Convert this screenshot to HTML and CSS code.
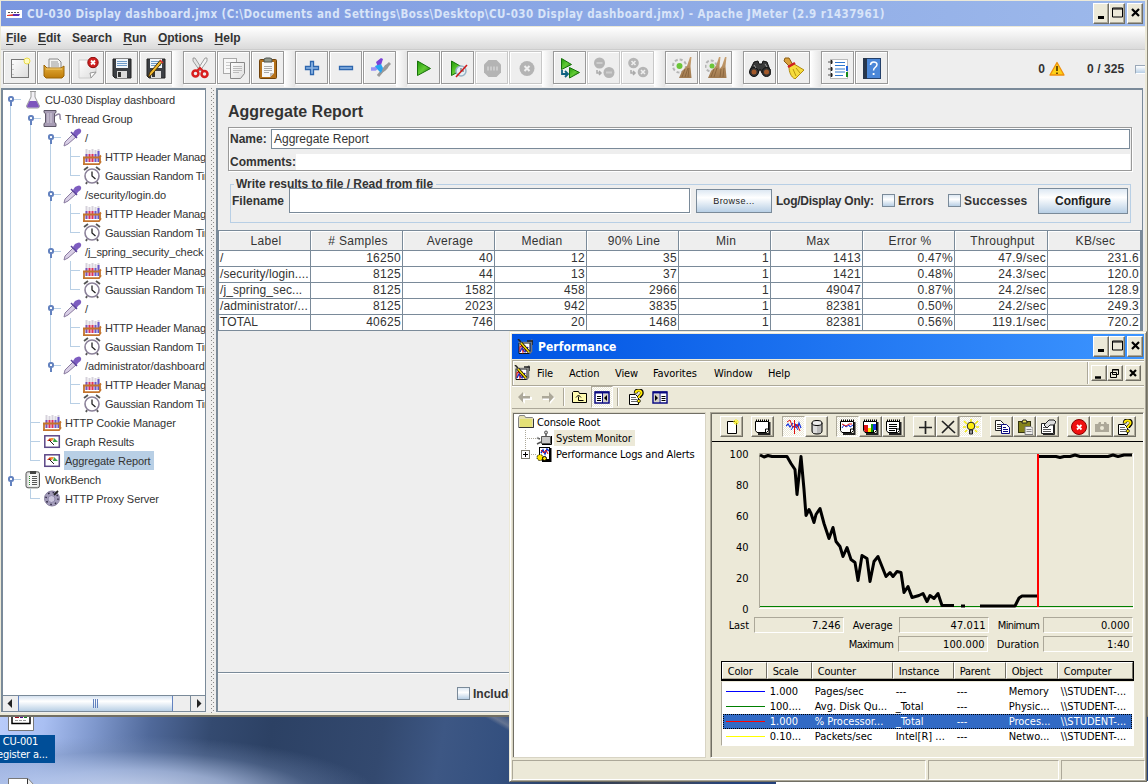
FILE: index.html
```html
<!DOCTYPE html>
<html lang="en">
<head>
<meta charset="utf-8">
<title>Apache JMeter</title>
<link rel="stylesheet" href="styles.css">
</head>
<body>
<svg class="defs" width="0" height="0">
<defs>
<linearGradient id="gGreen" x1="0" y1="0" x2="1" y2="1"><stop offset="0" stop-color="#1f9a08"/><stop offset=".5" stop-color="#62cc34"/><stop offset="1" stop-color="#176c08"/></linearGradient>
<linearGradient id="gGold" x1="0" y1="0" x2="0" y2="1"><stop offset="0" stop-color="#e8b23c"/><stop offset="1" stop-color="#bd7a08"/></linearGradient>
<linearGradient id="gPaper" x1="0" y1="0" x2="1" y2="1"><stop offset="0" stop-color="#fff"/><stop offset="1" stop-color="#dcdcdc"/></linearGradient>
<linearGradient id="gBroom" x1="0" y1="0" x2="0" y2="1"><stop offset="0" stop-color="#c9a070"/><stop offset="1" stop-color="#a07a50"/></linearGradient>
</defs>
<symbol id="i-new" viewBox="0 0 22 22"><rect x="2.500" y="2.500" width="17" height="18" fill="url(#gPaper)" stroke="#777"/><path d="M4 7v1M4 12v1M4 17v1" stroke="#999"/><circle cx="18" cy="4" r="3" fill="#fffbc0" stroke="#eadb4a"/></symbol>
<symbol id="i-open" viewBox="0 0 22 22"><path d="M6 2h9l3 3v8H6z" fill="#f4f4f4" stroke="#888"/><path d="M8 5h7M8 7h8M8 9h8" stroke="#999"/><path d="M1 8l3 3h14l3-2v10l-2 2H3l-2-2z" fill="url(#gGold)" stroke="#9a6407"/><path d="M3 12h16" stroke="#f6d27c"/></symbol>
<symbol id="i-close" viewBox="0 0 22 22"><path d="M2 3h17v13l-5 5H2z" fill="url(#gPaper)" stroke="#ccc"/><path d="M19 15l-6 1 1 5z" fill="#fff" stroke="#999"/><circle cx="16" cy="5.500" r="5.200" fill="#cf1f1f" stroke="#8d0c0c"/><path d="M14 3.500l4 4m0-4l-4 4" stroke="#fff" stroke-width="1.800"/></symbol>
<symbol id="i-save" viewBox="0 0 22 22"><path d="M2 2h18v19H4l-2-2z" fill="#3c3f44" stroke="#222"/><rect x="5" y="2" width="12" height="9" fill="#f0f5fa"/><path d="M6 4.500h10M6 6.500h10M6 8.500h10" stroke="#6f9bc8"/><rect x="6" y="14" width="10" height="7" fill="#ddd"/><rect x="7" y="15" width="3" height="5" fill="#333"/></symbol>
<symbol id="i-saveas" viewBox="0 0 22 22"><use href="#i-save"/><path d="M4.500 16L15 3.500l2 2L6.500 18l-3 2z" fill="#f0b72c" stroke="#4a3205"/><path d="M15 3l3 3" stroke="#d33" stroke-width="1.500"/></symbol>
<symbol id="i-cut" viewBox="0 0 22 22"><path d="M4 1l2 0 7 11-2 2L4 4z" fill="#e5e5e5" stroke="#888" stroke-width=".8"/><path d="M18 1l-2 0-7 11 2 2 7-10z" fill="#f5f5f5" stroke="#888" stroke-width=".8"/><circle cx="6.500" cy="16.500" r="3" fill="none" stroke="#d81e1e" stroke-width="2.500"/><circle cx="15.500" cy="17" r="3" fill="none" stroke="#d81e1e" stroke-width="2.500"/><path d="M8 14l3-3 3 3" stroke="#d81e1e" stroke-width="2" fill="none"/></symbol>
<symbol id="i-copy" viewBox="0 0 22 22"><rect x=".5" y="1.500" width="13" height="15" fill="#f8f8f8" stroke="#aaa"/><path d="M3 5.500h8M3 8.500h5M3 11.500h5" stroke="#ccc"/><path d="M7.500 5.500h14v11l-4 5h-10z" fill="url(#gPaper)" stroke="#888"/><path d="M10 9.500h9M10 11.500h9M10 13.500h9M10 15.500h6" stroke="#bbb"/></symbol>
<symbol id="i-paste" viewBox="0 0 22 22"><rect x="2.500" y="2.500" width="17" height="19" rx="1" fill="#b5711b" stroke="#6f420b"/><path d="M5 5h12v11l-4 4H5z" fill="#f7f7f7"/><path d="M7 9.500h8M7 11.500h8M7 13.500h8M7 15.500h5" stroke="#aaa"/><path d="M13 20l0-4 4 0z" fill="#bbb"/><path d="M7 5V2l2-1h4l2 1v3z" fill="#8f968c" stroke="#4e534c"/></symbol>
<symbol id="i-plus" viewBox="0 0 22 22"><path d="M9.500 4.500h3v5h5v3h-5v5h-3v-5h-5v-3h5z" fill="#8db6e4" stroke="#2d66ae" stroke-width="1.300"/></symbol>
<symbol id="i-minus" viewBox="0 0 22 22"><path d="M4.500 9.500h13v3h-13z" fill="#8db6e4" stroke="#2d66ae" stroke-width="1.300"/></symbol>
<symbol id="i-toggle" viewBox="0 0 22 22"><path d="M9 20l4-6 3-6 4-1-1 4-3 3-4 2z" fill="#999"/><path d="M9 19l5-6 7-7" stroke="#999" stroke-width="3" fill="none"/><path d="M2 12l4 0 4-3" stroke="#9a92f5" stroke-width="3.500" fill="none"/><path d="M7 5l5-4 2 1-2 6-3 2z" fill="#7b42d8"/><path d="M6 9l6-2 2 4-2 5-3-3z" fill="#27a4f2"/></symbol>
<symbol id="i-run" viewBox="0 0 22 22"><path d="M4.500 4l13 7.500-13 7z" fill="url(#gGreen)" stroke="#17720a"/></symbol>
<symbol id="i-runnt" viewBox="0 0 22 22"><path d="M4.500 4l13 7.500-13 7z" fill="url(#gGreen)" stroke="#17720a"/><circle cx="14" cy="14" r="5" fill="#e4eef5" stroke="#98b3c6" stroke-width="1.500"/><path d="M14 11v3h3" stroke="#555" fill="none"/><path d="M9 20L20 8" stroke="#d01818" stroke-width="1.600"/></symbol>
<symbol id="i-stop" viewBox="0 0 22 22"><path d="M7.500 3h8l4.500 4.500v8L15.500 20h-8L3 15.500v-8z" fill="#b4b4b4"/><path d="M6 11.500h11" stroke="#ccc" stroke-width="4" stroke-dasharray="2 1"/></symbol>
<symbol id="i-shut" viewBox="0 0 22 22"><circle cx="12" cy="11.500" r="7.500" fill="#b4b4b4"/><path d="M9.500 9l5 5m0-5l-5 5" stroke="#efefef" stroke-width="2"/></symbol>
<symbol id="i-remote" viewBox="0 0 22 22"><path d="M2.500 1.500l10 6-10 5z" fill="url(#gGreen)" stroke="#17720a"/><path d="M10.500 10.500l10 5-10 5.500z" fill="url(#gGreen)" stroke="#17720a"/><path d="M3 13v4h5m-2-3l3 3-3 3" fill="none" stroke="#0d6080" stroke-width="1.800"/></symbol>
<symbol id="i-rstop" viewBox="0 0 22 22"><circle cx="6.500" cy="6" r="5.500" fill="#b5b5b5"/><circle cx="16" cy="15.500" r="5.500" fill="#b5b5b5"/><path d="M3.500 6h6M13 15.500h6" stroke="#cdcdcd" stroke-width="2"/><path d="M4 13v3h4m-2-2l2 2-2 2" fill="none" stroke="#aaa" stroke-width="1.500"/></symbol>
<symbol id="i-rshut" viewBox="0 0 22 22"><circle cx="6.500" cy="6" r="5.300" fill="#b5b5b5"/><circle cx="16" cy="15" r="5.300" fill="#b5b5b5"/><path d="M4.500 4l4 4m0-4l-4 4M14 13l4 4m0-4l-4 4" stroke="#eee" stroke-width="1.600"/><path d="M4 13v3h4m-2-2l2 2-2 2" fill="none" stroke="#aaa" stroke-width="1.500"/></symbol>
<symbol id="i-clear" viewBox="0 0 22 22"><circle cx="8.500" cy="9" r="6.500" fill="#eee" stroke="#b5b5b5" stroke-dasharray="3 2" stroke-width="2"/><circle cx="8.500" cy="9" r="3" fill="#6cc63a"/><path d="M19 0h1.500l-1 9 1 12H8l3-7 5-5z" fill="url(#gBroom)"/><path d="M11 20l3-8M14 20l3-9M17 20l1-9" stroke="#7d5a34" stroke-width=".7"/></symbol>
<symbol id="i-clearall" viewBox="0 0 22 22"><circle cx="6" cy="9" r="5.500" fill="#e9e9e9" stroke="#b5b5b5" stroke-dasharray="3 2" stroke-width="2"/><circle cx="7" cy="9" r="2.500" fill="#6cc63a"/><path d="M14 0h1.500l-1 9 1 12H3l3-7 5-5z" fill="url(#gBroom)"/><path d="M20 0h1.500l-1 9 1 12H12l1-7 4-5z" fill="url(#gBroom)"/><path d="M6 20l3-8M9 20l3-9M15 20l1-8M18 20l1-9" stroke="#7d5a34" stroke-width=".7"/></symbol>
<symbol id="i-find" viewBox="0 0 22 22"><path d="M5 5l4-1 1 3h3l1-3 4 1 3 8-8 3-2-4-2 4-8-3z" fill="#3a3a3a" stroke="#111"/><circle cx="5" cy="15" r="4.500" fill="#333" stroke="#111"/><circle cx="17.500" cy="15" r="4.500" fill="#333" stroke="#111"/><circle cx="5" cy="15" r="2.500" fill="#a4592a"/><circle cx="17.500" cy="15" r="2.500" fill="#a4592a"/><path d="M5 8l2 3M16 7l2 3" stroke="#999"/></symbol>
<symbol id="i-broom" viewBox="0 0 22 22"><path d="M2 1l4 0 4 7-3 2-6-6z" fill="#d9a03c" stroke="#8b5d12"/><path d="M6 10l5-3 10 6-9 9c-4-2-6-7-6-12z" fill="#f6dc3c" stroke="#b08a10"/><path d="M5 10l7-4" stroke="#d02020" stroke-width="2.500"/><path d="M10 12l3 7M13 11l4 5" stroke="#b8960f"/></symbol>
<symbol id="i-list" viewBox="0 0 22 22"><rect x="3.500" y="2.500" width="17" height="19" fill="#fff" stroke="#bbb"/><path d="M8 5.500h10M8 8.500h10M8 12h10M8 15h10M8 18.500h8" stroke="#2f78d0"/><path d="M1 5h5M1 12h5M1 18h5" stroke="#888" stroke-width="1.500"/><path d="M4.500 3v4M4.500 10v4M4.500 16v4" stroke="#222" stroke-width="1.500"/><rect x="19" y="9" width="2" height="5" fill="#2464d8"/><rect x="19" y="15" width="2" height="5" fill="#128a1a"/></symbol>
<symbol id="i-help" viewBox="0 0 22 22"><rect x="2.500" y="1.500" width="17" height="20" fill="#4b87d8" stroke="#24406a"/><path d="M2 1h4v21H2z" fill="#27364c"/><path d="M9.500 8c0-4 6.500-4 6.500-.5 0 3-3.500 2.500-3.500 6" fill="none" stroke="#fff" stroke-width="1.500"/><rect x="11.700" y="16" width="1.800" height="2" fill="#fff"/></symbol>
<symbol id="i-warn" viewBox="0 0 16 16"><path d="M8 1.500L15 14H1z" fill="#fdd018" stroke="#ee8f0c" stroke-width="1.300" stroke-linejoin="round"/><path d="M8 5v5M8 11.500v1.500" stroke="#5a3a00" stroke-width="1.700"/></symbol>

<symbol id="t-flask" viewBox="0 0 20 19"><path d="M7 1.500h6M8 2v5l-4.500 9q0 2 2 2h9q2 0 2-2L12 7V2" fill="#f2f0f5" stroke="#999"/><path d="M6.500 11h7l2.500 5q0 1.500-1.500 1.500h-9Q4 17.500 4 16z" fill="#7d55bd"/></symbol>
<symbol id="t-spool" viewBox="0 0 20 19"><path d="M2 1.500h12v2l-1.500 1v9l1.500 1v3H2v-3l1.500-1v-9L2 3.500z" fill="#a79cb4" stroke="#5d5667"/><path d="M6 4v10M9 4v10" stroke="#d6cfdf"/><path d="M13 7q5-4 5 0t1 3" fill="none" stroke="#8f84a0" stroke-width="1.500"/></symbol>
<symbol id="t-drop" viewBox="0 0 20 19"><path d="M2 18l1-4 8-8 3 3-8 7z" fill="#d9cfe6" stroke="#8a7ba0"/><path d="M11 5l2-3q5-3 6 0t-3 5l-2 3z" fill="#7d5cc0"/><path d="M9 4l6 6" stroke="#5c449c" stroke-width="1.500"/></symbol>
<symbol id="t-tubes" viewBox="0 0 20 19"><path d="M4.500 2v13M7.500 3v12M10.500 2v13M13.500 3v12M16.500 2v13" stroke="#d7d3dc" stroke-width="2"/><path d="M4.500 7v8" stroke="#7a55b8" stroke-width="2"/><path d="M7.500 7v8M10.500 7v8" stroke="#e0305a" stroke-width="2"/><path d="M13.500 7v8M16.500 4v11" stroke="#6a58c8" stroke-width="2"/><path d="M1 10.500h16l2-2M1 17.200h16l2-3M2 10v7M18 9v7" fill="none" stroke="#c4742c" stroke-width="1.800"/></symbol>
<symbol id="t-clock" viewBox="0 0 20 19"><path d="M2 4l4-3M18 4l-4-3M5 16l-1 2M15 16l1 2" stroke="#555" stroke-width="1.800"/><circle cx="10" cy="10" r="7" fill="#fff" stroke="#8b8199" stroke-width="1.600"/><path d="M10 5.500V10l3.500 3" fill="none" stroke="#222" stroke-width="1.300"/></symbol>
<symbol id="t-gauge" viewBox="0 0 20 19"><rect x="2.800" y="3.800" width="14.500" height="11.500" fill="#fff" stroke="#5b4787" stroke-width="1.500"/><path d="M5 9l3-3 2 3z" fill="#e03a1c"/><path d="M8 6l4 0-2 3z" fill="#f39230"/><path d="M12 6l4 4-5 0z" fill="#3ca543"/><path d="M7 8l5 5" stroke="#222"/></symbol>
<symbol id="t-bench" viewBox="0 0 20 19"><rect x="3" y="1.800" width="13.500" height="16" rx="2" fill="#ddd" stroke="#555"/><rect x="5.500" y="3.500" width="9" height="13" fill="#f8f8f8"/><path d="M9 6.500h5M9 8.500h5M9 10.500h5M9 12.500h5M9 14.500h5" stroke="#555"/><path d="M6.500 6v9" stroke="#2b8a2b" stroke-dasharray="1 1"/><rect x="7" y="1" width="6" height="3" fill="#444"/></symbol>
<symbol id="t-proxy" viewBox="0 0 20 19"><circle cx="10" cy="9.500" r="7.500" fill="#a49dbb" stroke="#8880a0"/><circle cx="10" cy="9.500" r="6" fill="none" stroke="#2e2842" stroke-dasharray="1.500 3.200" stroke-width="1.500"/><circle cx="9.500" cy="10" r="3.500" fill="#cac5dc" stroke="#8f87ab"/><path d="M12 6l4-4" stroke="#222" stroke-width="1.800"/></symbol>

<symbol id="p-app" viewBox="0 0 16 16"><path d="M2 4h11v10.500H2z" fill="#fff" stroke="#111"/><path d="M1.500 3.500h11l2-2v11l-2 2" fill="none" stroke="#777" stroke-width="1.500"/><path d="M1 0l3 3M10 2h6v4" stroke="#222" fill="none" stroke-width="1.500"/><path d="M3 13V8l2-2 1 7 2-5 1 4 2-4" fill="none" stroke="#e01010" stroke-width="1.200"/><path d="M3 13l2-4 3 4 3-5" fill="none" stroke="#1030d0" stroke-width="1.200"/><path d="M4 4l8 9" stroke="#000" stroke-width="3"/><path d="M4 4l8 9" stroke="#f5d800" stroke-width="1.600"/></symbol>
<symbol id="p-left" viewBox="0 0 16 16"><path d="M2 8l5-5v4h7v3H7v4z" fill="#fff" transform="translate(1 1)"/><path d="M1 8l5-5v4h7v2.500H6v4z" fill="#aca899"/></symbol>
<symbol id="p-right" viewBox="0 0 16 16"><path d="M14 8L9 3v4H2v3h7v4z" fill="#fff" transform="translate(1 1)"/><path d="M14 8L9 3v4H2v2.500h7v4z" fill="#aca899"/></symbol>
<symbol id="p-up" viewBox="0 0 16 16"><path d="M.5 13.500v-10l1-1h5l1 2h7v9z" fill="#fffbb0" stroke="#000"/><path d="M11.500 11.500h-5v-4M4 8.500l2.500-2.500L9 8.500" fill="none" stroke="#000"/></symbol>
<symbol id="p-tree" viewBox="0 0 16 16"><rect x="1" y="3" width="14" height="11" fill="#fff" stroke="#0a0a80" stroke-width="1.500"/><path d="M1 3.500h14" stroke="#0a0a80" stroke-width="2"/><path d="M8.500 4v10" stroke="#0a0a80"/><path d="M9 5h5v8H9z" fill="#d4d0c8"/><path d="M3 7.500h4M3 9.500h4M3 11.500h4" stroke="#000"/><path d="M13 6v6l-3-3z"/></symbol>
<symbol id="p-act" viewBox="0 0 16 16"><rect x="1" y="3" width="14" height="11" fill="#fff" stroke="#0a0a80" stroke-width="1.500"/><path d="M1 3.500h14" stroke="#0a0a80" stroke-width="2"/><path d="M8 4v10" stroke="#0a0a80"/><path d="M2 5h5v8H2z" fill="#d4d0c8"/><path d="M9.500 7.500h4M9.500 9.500h4M9.500 11.500h4" stroke="#000"/><path d="M3 6v6l3-3z"/></symbol>
<symbol id="p-help" viewBox="0 0 16 16"><path d="M1.500 5.500h6l3 3v7h-9z" fill="#fff" stroke="#000"/><path d="M3 8.500h5M3 10.500h6M3 12.500h6" stroke="#666"/><path d="M7.500 4.500C7.500 0 14 0 14 4c0 2.500-3 2.500-3 5" fill="none" stroke="#000" stroke-width="3.600"/><path d="M7.500 4C8 .500 13.500 1 13.500 4c0 2.500-3 2-3 5" fill="none" stroke="#ffe800" stroke-width="2"/><circle cx="10.800" cy="12" r="1.600" fill="#ffe800" stroke="#000" stroke-width=".7"/></symbol>
<symbol id="p-folder" viewBox="0 0 16 16"><path d="M.5 13.500V3.500l1-2h5l1 2h7l1 1v9z" fill="#e6e0b0" stroke="#848484"/><path d="M2 5h12v8H2z" fill="#e2df5e" opacity=".7"/><path d="M15.500 5v8.500H1" fill="none" stroke="#333"/></symbol>
<symbol id="p-mon" viewBox="0 0 16 16"><path d="M5.500 6.500h9v7h-9z" fill="#c8c8c8" stroke="#555"/><path d="M15.500 6v8.500H6" fill="none" stroke="#000"/><path d="M10 6V3M4 9L1 8M5 12l-4 2" stroke="#555" stroke-width="1.500"/><circle cx="10" cy="2.500" r="1.500" fill="#ccc" stroke="#555"/><circle cx="1.800" cy="7.800" r="1" fill="#aaa"/></symbol>
<symbol id="p-logs" viewBox="0 0 16 16"><rect x="3.500" y="1.500" width="10" height="12" fill="#fff" stroke="#000"/><path d="M14.500 2v13H6" fill="none" stroke="#000" stroke-width="2"/><path d="M5 7l2-3 2 4 2-5 2 2" stroke="#1030d0" fill="none" stroke-width="1.500"/><path d="M5 4l3 3 2-3 2 4" stroke="#e01010" fill="none"/><circle cx="4" cy="11.500" r="3" fill="#ffe600" stroke="#000" stroke-dasharray="1.500 1"/><circle cx="8.500" cy="12.500" r="2" fill="#ffe600" stroke="#000"/></symbol>

<symbol id="m-page" viewBox="0 0 16 16"><path d="M3.500 2.500h9v12h-9z" fill="#fff" stroke="#000"/><path d="M12 0v6M9 3h6M10 1l4 4M14 1l-4 4" stroke="#f6ee20"/></symbol>
<symbol id="m-pad" viewBox="0 0 16 16"><path d="M14.500 3v12H3" fill="none" stroke="#222" stroke-width="2"/><path d="M.5 2.500h13v9l-2 2H2l-1.500-2z" fill="#fff" stroke="#000"/><path d="M1 1.500h13" stroke="#000" stroke-width="2" stroke-dasharray="1 1"/><path d="M10.500 14v-4h3" fill="none" stroke="#000"/></symbol>
<symbol id="m-live" viewBox="0 0 16 16"><path d="M0 7l2-2 2 3 3-4M9 5l3 3 1-4 2 5" fill="none" stroke="#1030e0" stroke-width="1.200"/><path d="M1 3l3-2 3 8M9 9l2-4 3 7" fill="none" stroke="#e01010"/><path d="M5 11l2-3 2-2 3 5" fill="none" stroke="#1030e0"/><path d="M8.500 1v14" stroke="#e01010"/></symbol>
<symbol id="m-cyl" viewBox="0 0 16 16"><path d="M3 4v8q0 3 5 3t5-3V4z" fill="#bbb" stroke="#000"/><path d="M5 5v9M7 5v9" stroke="#fff"/><ellipse cx="8" cy="4" rx="5" ry="2.500" fill="#eee" stroke="#000"/></symbol>
<symbol id="m-graph" viewBox="0 0 16 16"><use href="#m-pad"/><path d="M2 9l2-3 2 2 3-2 1 2 3-2" fill="none" stroke="#1030e0"/><path d="M2 5l4 2 3-2 3 0" fill="none" stroke="#e01010"/></symbol>
<symbol id="m-hist" viewBox="0 0 16 16"><use href="#m-pad"/><path d="M1 6h4v7H2l-1-2z" fill="#e01010"/><path d="M5 9h3v4H5z" fill="#ffe800"/><path d="M8 5h2v8H8z" fill="#0a9a0a"/><path d="M10 5h3v6h-3z" fill="#1030e0"/></symbol>
<symbol id="m-rep" viewBox="0 0 16 16"><use href="#m-pad"/><path d="M3 5.500h8M3 7.500h8M3 9.500h8M3 11.500h6" stroke="#000"/></symbol>
<symbol id="m-add" viewBox="0 0 16 16"><path d="M8.500 2v13M2 8.500h13" stroke="#222" stroke-width="1.700"/></symbol>
<symbol id="m-del" viewBox="0 0 16 16"><path d="M2 2l13 12M14 2L2 14" stroke="#222" stroke-width="1.700"/></symbol>
<symbol id="m-bulb" viewBox="0 0 16 16"><path d="M8 0v3M1 2l3 3M15 2l-3 3M0 8h3M13 8h3M2 13l2-2M14 13l-2-2" stroke="#f4ea10" stroke-width="1.500"/><circle cx="8" cy="7" r="3.800" fill="#ffee10" stroke="#222"/><path d="M6.500 11h3v4h-3z" fill="#999" stroke="#222"/></symbol>
<symbol id="m-copy" viewBox="0 0 16 16"><path d="M1.500 1.500h5l3 3v7h-8z" fill="#fff" stroke="#222"/><path d="M3 5.500h4M3 7.500h4M3 9.500h4" stroke="#333"/><path d="M7.500 5.500h5l3 3v6h-8z" fill="#fff" stroke="#0a0a80"/><path d="M9 8.500h3M9 10.500h5M9 12.500h5" stroke="#0a0a80"/></symbol>
<symbol id="m-paste" viewBox="0 0 16 16"><rect x="1.500" y="2.500" width="12" height="11" fill="#84821a" stroke="#333310"/><path d="M5 3l1-2h3l1 2v1H5z" fill="#e8e050" stroke="#222"/><path d="M8 7.500h6l2 2v6H8z" fill="#eee" stroke="#777"/><path d="M9.500 10.500h5M9.500 12.500h5" stroke="#888"/></symbol>
<symbol id="m-prop" viewBox="0 0 16 16"><path d="M1.500 4.500h12v10h-12z" fill="#fff" stroke="#222"/><path d="M3 8.500h5M3 10.500h8M3 12.500h8" stroke="#555"/><path d="M4 6l5-5h5l2 2-2 3-4 0-3 3z" fill="#ddd" stroke="#222"/><path d="M14.500 6v9.500H3" stroke="#222" fill="none"/></symbol>
<symbol id="m-freeze" viewBox="0 0 16 16"><circle cx="8" cy="8" r="7.500" fill="#f01010" stroke="#800"/><path d="M6 6l4.500 4.500m0-4.500L6 10.500" stroke="#fff" stroke-width="1.800"/></symbol>
<symbol id="m-cam" viewBox="0 0 16 16"><path d="M1 5h3l1-2h2v2h3V3h2l1 2h2v8H1z" fill="#aca899"/><circle cx="8" cy="9" r="2" fill="#ece9d8"/></symbol>
</svg>

<div class="desktop">
  <div class="dicon dicon-top"><svg width="26" height="14" viewBox="0 0 26 14"><path d="M.5 0v13.500h25V0" fill="#fff" stroke="#777"/><path d="M4 0v6.500h18V0" fill="#fff" stroke="#000" stroke-width="1.500"/><path d="M7 .5h4" stroke="#a01020"/><path d="M12 .5h3" stroke="#501090"/><path d="M16 .5h3" stroke="#108020"/><path d="M7 3.500h12" stroke="#999" stroke-dasharray="3 1"/></svg></div>
  <div class="dlabel"><div>CU-001</div><div>register a...</div></div>
  <div class="dicon dicon-low"><svg width="26" height="8" viewBox="0 0 26 8"><path d="M.5 8V.5H20l5.500 6V8" fill="#fff" stroke="#777"/><path d="M19.500 1v6.500H26" fill="#eee" stroke="#333"/></svg></div>
  <div class="deskedge"></div>
</div>

<main class="jm">
  <header class="jm-title">
    <svg class="jm-logo" width="16" height="8" viewBox="0 0 16 8"><path d="M0 0h16v8H0z" fill="#fff"/><path d="M2 2.500h12" stroke="#555" stroke-dasharray="2 1"/><path d="M1 5l7-1v2H1z" fill="#e03a30"/><path d="M7 4l7 0-1 2H7z" fill="#5a2ab0"/></svg>
    <h1>CU-030 Display dashboard.jmx (C:\Documents and Settings\Boss\Desktop\CU-030 Display dashboard.jmx) - Apache JMeter (2.9 r1437961)</h1>
    <div class="wbtns"><i><svg width="16" height="18"><path d="M4 13.500h6" stroke="#000" stroke-width="3"/></svg></i><i><svg width="16" height="18"><path d="M2.500 4h10v9h-10zM2 5h11" fill="none" stroke="#000"/></svg></i><i class="x"><svg width="16" height="18"><path d="M4 5l7 7m0-7l-7 7" stroke="#000" stroke-width="2.200"/></svg></i></div>
  </header>
  <nav class="jm-menu"><span><u>F</u>ile</span><span><u>E</u>dit</span><span>Search</span><span><u>R</u>un</span><span><u>O</u>ptions</span><span><u>H</u>elp</span></nav>
  <div class="jm-tools">
    <div class="tg"><b><svg><use href="#i-new"/></svg></b><b><svg><use href="#i-open"/></svg></b><b><svg><use href="#i-close"/></svg></b><b><svg><use href="#i-save"/></svg></b><b><svg><use href="#i-saveas"/></svg></b></div>
    <div class="tg"><b><svg><use href="#i-cut"/></svg></b><b><svg><use href="#i-copy"/></svg></b><b><svg><use href="#i-paste"/></svg></b></div>
    <div class="tg"><b><svg><use href="#i-plus"/></svg></b><b><svg><use href="#i-minus"/></svg></b><b><svg><use href="#i-toggle"/></svg></b></div>
    <div class="tg"><b><svg><use href="#i-run"/></svg></b><b><svg><use href="#i-runnt"/></svg></b><b class="off"><svg><use href="#i-stop"/></svg></b><b class="off"><svg><use href="#i-shut"/></svg></b></div>
    <div class="tg"><b><svg><use href="#i-remote"/></svg></b><b class="off"><svg><use href="#i-rstop"/></svg></b><b class="off"><svg><use href="#i-rshut"/></svg></b></div>
    <div class="tg"><b><svg><use href="#i-clear"/></svg></b><b><svg><use href="#i-clearall"/></svg></b></div>
    <div class="tg"><b><svg><use href="#i-find"/></svg></b><b><svg><use href="#i-broom"/></svg></b></div>
    <div class="tg last"><b><svg><use href="#i-list"/></svg></b><b><svg><use href="#i-help"/></svg></b></div>
    <div class="jm-count"><span>0</span><svg class="warn" width="16" height="16"><use href="#i-warn"/></svg><span class="thr">0 / 325</span><i class="led"></i></div>
  </div>
  <div class="jm-body">
    <section class="tree">
      <div class="rows">
        <div class="r"><i class="h"></i><svg class="fl"><use href="#t-flask"/></svg><span>CU-030 Display dashboard</span></div>
        <div class="r"><i class="v"></i><i class="h"></i><svg><use href="#t-spool"/></svg><span>Thread Group</span></div>
        <div class="r"><i class="v"></i><i class="v"></i><i class="h"></i><svg><use href="#t-drop"/></svg><span>/</span></div>
        <div class="r"><i class="v"></i><i class="v"></i><i class="v"></i><i class="t"></i><svg><use href="#t-tubes"/></svg><span>HTTP Header Manager</span></div>
        <div class="r"><i class="v"></i><i class="v"></i><i class="v"></i><i class="l"></i><svg><use href="#t-clock"/></svg><span>Gaussian Random Timer</span></div>
        <div class="r"><i class="v"></i><i class="v"></i><i class="h m"></i><svg><use href="#t-drop"/></svg><span>/security/login.do</span></div>
        <div class="r"><i class="v"></i><i class="v"></i><i class="v"></i><i class="t"></i><svg><use href="#t-tubes"/></svg><span>HTTP Header Manager</span></div>
        <div class="r"><i class="v"></i><i class="v"></i><i class="v"></i><i class="l"></i><svg><use href="#t-clock"/></svg><span>Gaussian Random Timer</span></div>
        <div class="r"><i class="v"></i><i class="v"></i><i class="h m"></i><svg><use href="#t-drop"/></svg><span>/j_spring_security_check</span></div>
        <div class="r"><i class="v"></i><i class="v"></i><i class="v"></i><i class="t"></i><svg><use href="#t-tubes"/></svg><span>HTTP Header Manager</span></div>
        <div class="r"><i class="v"></i><i class="v"></i><i class="v"></i><i class="l"></i><svg><use href="#t-clock"/></svg><span>Gaussian Random Timer</span></div>
        <div class="r"><i class="v"></i><i class="v"></i><i class="h m"></i><svg><use href="#t-drop"/></svg><span>/</span></div>
        <div class="r"><i class="v"></i><i class="v"></i><i class="v"></i><i class="t"></i><svg><use href="#t-tubes"/></svg><span>HTTP Header Manager</span></div>
        <div class="r"><i class="v"></i><i class="v"></i><i class="v"></i><i class="l"></i><svg><use href="#t-clock"/></svg><span>Gaussian Random Timer</span></div>
        <div class="r"><i class="v"></i><i class="v"></i><i class="h e"></i><svg><use href="#t-drop"/></svg><span>/administrator/dashboard</span></div>
        <div class="r"><i class="v"></i><i class="v"></i><i></i><i class="t"></i><svg><use href="#t-tubes"/></svg><span>HTTP Header Manager</span></div>
        <div class="r"><i class="v"></i><i class="v"></i><i></i><i class="l"></i><svg><use href="#t-clock"/></svg><span>Gaussian Random Timer</span></div>
        <div class="r"><i class="v"></i><i class="t"></i><svg><use href="#t-tubes"/></svg><span>HTTP Cookie Manager</span></div>
        <div class="r"><i class="v"></i><i class="t"></i><svg><use href="#t-gauge"/></svg><span>Graph Results</span></div>
        <div class="r"><i class="v"></i><i class="l"></i><svg><use href="#t-gauge"/></svg><span class="sel">Aggregate Report</span></div>
        <div class="r"><i class="h e"></i><svg class="fl"><use href="#t-bench"/></svg><span>WorkBench</span></div>
        <div class="r"><i></i><i class="l"></i><svg><use href="#t-proxy"/></svg><span>HTTP Proxy Server</span></div>
      </div>
      <div class="hscroll"><i class="arr"><svg width="15" height="15"><path d="M9 3v9L4.500 7.500z" fill="#222"/></svg></i><i class="thumb"><em></em><em></em><em></em></i><i class="track"></i><i class="arr r2"><svg width="15" height="15"><path d="M6 3v9l4.500-4.500z" fill="#222"/></svg></i></div>
    </section>
    <div class="divider"></div>
    <section class="panel">
      <h2>Aggregate Report</h2>
      <div class="namebox">
        <div class="nrow"><label>Name:</label><div class="field">Aggregate Report</div></div>
        <div class="crow"><label>Comments:</label><div class="blank"></div></div>
      </div>
      <fieldset class="fs"><legend>Write results to file / Read from file</legend>
        <div class="frow"><label>Filename</label><div class="file"></div><div class="btn browse">Browse...</div><label class="lg">Log/Display Only:</label><i class="cb"></i><label class="er">Errors</label><i class="cb"></i><label class="su">Successes</label><div class="btn conf">Configure</div></div>
      </fieldset>
      <div class="scroll">
        <table class="agg">
          <colgroup><col class="c92"><col class="c92"><col class="c92"><col class="c92"><col class="c92"><col class="c92"><col class="c92"><col class="c92"><col class="c93"><col class="c93"></colgroup>
          <thead><tr><th>Label</th><th># Samples</th><th>Average</th><th>Median</th><th>90% Line</th><th>Min</th><th>Max</th><th>Error %</th><th>Throughput</th><th>KB/sec</th></tr></thead>
          <tbody>
            <tr><td>/</td><td>16250</td><td>40</td><td>12</td><td>35</td><td>1</td><td>1413</td><td>0.47%</td><td>47.9/sec</td><td>231.6</td></tr>
            <tr><td>/security/login....</td><td>8125</td><td>44</td><td>13</td><td>37</td><td>1</td><td>1421</td><td>0.48%</td><td>24.3/sec</td><td>120.0</td></tr>
            <tr><td>/j_spring_sec...</td><td>8125</td><td>1582</td><td>458</td><td>2966</td><td>1</td><td>49047</td><td>0.87%</td><td>24.2/sec</td><td>128.9</td></tr>
            <tr><td>/administrator/...</td><td>8125</td><td>2023</td><td>942</td><td>3835</td><td>1</td><td>82381</td><td>0.50%</td><td>24.2/sec</td><td>249.3</td></tr>
            <tr><td>TOTAL</td><td>40625</td><td>746</td><td>20</td><td>1468</td><td>1</td><td>82381</td><td>0.56%</td><td>119.1/sec</td><td>720.2</td></tr>
          </tbody>
        </table>
      </div>
      <div class="include"><i class="cb"></i><label>Include</label></div>
    </section>
  </div>
</main>

<section class="pf">
  <header class="pf-title"><svg width="16" height="16"><use href="#p-app"/></svg><h3>Performance</h3>
    <div class="wbtns"><i><svg width="16" height="18"><path d="M4 13.500h6" stroke="#000" stroke-width="3"/></svg></i><i><svg width="16" height="18"><path d="M2.500 4h10v9h-10zM2 5h11" fill="none" stroke="#000"/></svg></i><i class="x"><svg width="16" height="18"><path d="M4 5l7 7m0-7l-7 7" stroke="#000" stroke-width="2.200"/></svg></i></div>
  </header>
  <nav class="pf-menu"><svg width="16" height="16"><use href="#p-app"/></svg><span class="w32">File</span><span class="w46">Action</span><span class="w38">View</span><span class="w61">Favorites</span><span class="w54">Window</span><span>Help</span>
    <div class="mdi"><i><svg width="16" height="16"><path d="M3 11.500h6" stroke="#000" stroke-width="2.500"/></svg></i><i><svg width="16" height="16"><path d="M4.500 3.500h6v5h-6zM4 4h7M2.500 6.500h6v5h-6z" fill="#ece9d8" stroke="#000"/></svg></i><i class="x"><svg width="16" height="16"><path d="M4 4l6 6m0-6l-6 6" stroke="#000" stroke-width="2.200"/></svg></i></div>
  </nav>
  <div class="pf-bar"><svg><use href="#p-left"/></svg><svg class="a2"><use href="#p-right"/></svg><i class="sep"></i><svg><use href="#p-up"/></svg><b><svg><use href="#p-tree"/></svg></b><i class="sep s2"></i><svg class="hp"><use href="#p-help"/></svg><svg><use href="#p-act"/></svg></div>
  <div class="pf-body">
    <div class="pf-tree">
      <div class="p0"><svg><use href="#p-folder"/></svg><span>Console Root</span></div>
      <div class="p1"><i class="dots"></i><svg><use href="#p-mon"/></svg><span class="psel">System Monitor</span></div>
      <div class="p1"><i class="dots end"><em></em></i><svg><use href="#p-logs"/></svg><span>Performance Logs and Alerts</span></div>
    </div>
    <div class="pf-mon">
      <div class="mbar">
        <div class="mg"><b><svg><use href="#m-page"/></svg></b></div>
        <div class="mg"><b><svg><use href="#m-pad"/></svg></b></div>
        <div class="mg"><b class="on"><svg><use href="#m-live"/></svg></b><b><svg><use href="#m-cyl"/></svg></b></div>
        <div class="mg"><b class="on"><svg><use href="#m-graph"/></svg></b><b><svg><use href="#m-hist"/></svg></b><b><svg><use href="#m-rep"/></svg></b></div>
        <div class="mg"><b><svg><use href="#m-add"/></svg></b><b><svg><use href="#m-del"/></svg></b><b class="on"><svg><use href="#m-bulb"/></svg></b></div>
        <div class="mg"><b><svg><use href="#m-copy"/></svg></b><b><svg><use href="#m-paste"/></svg></b><b><svg><use href="#m-prop"/></svg></b></div>
        <div class="mg"><b><svg><use href="#m-freeze"/></svg></b><b><svg><use href="#m-cam"/></svg></b><b><svg><use href="#p-help"/></svg></b></div>
      </div>
      <div class="chart">
        <div class="ylab"><span>100</span><span>80</span><span>60</span><span>40</span><span>20</span><span>0</span></div>
        <svg class="plot" width="375" height="156" viewBox="759 453 375 156">
          <path d="M759.500 608V453.500H1133" fill="none" stroke="#aca899"/><path d="M1133.500 453v155.500H759" fill="none" stroke="#fff"/>
          <path d="M760 606.500h373" stroke="#008000"/>
          <g fill="none" stroke="#000" stroke-width="3" stroke-linejoin="round">
          <path d="M760 455l4 2 4-1.500 4 1 15 0 4 7 4 6 2 25 4-38 3 33 2 26 3-6 2 4 3 9 2-8 4-6 4 15 5 15 4-11 3 14 4 5 3 10 4-9 4 12 4 3 3 18 4-25 5 3 3 23 4-20 4-5 4 10 4 10 4-4 3 4 4-5 4 1 3 20 4-6 4 11 7-2 4-2 4 8 3-6 4 3 4-5 4 12h12"/>
          <path d="M961 606h4M980 606h35l4-8 3-2h16M1038 456.500h18l4 1 4-1h6l5-1.500 5 1.500h28l5-1.500 5 1.500 6-1.500h8"/></g>
          <path d="M1038 454v153" stroke="#f00" stroke-width="2"/>
        </svg>
      </div>
      <div class="stats">
        <label>Last</label><output>7.246</output><label>Average</label><output>47.011</output><label class="tight">Minimum</label><output>0.000</output>
      </div>
      <div class="stats two">
        <label class="tight">Maximum</label><output>100.000</output><label>Duration</label><output>1:40</output>
      </div>
      <div class="ctr">
        <div class="crw chead"><span>Color</span><span>Scale</span><span>Counter</span><span>Instance</span><span>Parent</span><span>Object</span><span>Computer</span></div>
        <div class="clist">
          <div class="crw"><i class="blue"></i><span>1.000</span><span>Pages/sec</span><span>---</span><span>---</span><span>Memory</span><span>\\STUDENT-...</span></div>
          <div class="crw"><i class="green"></i><span>100....</span><span>Avg. Disk Qu...</span><span>_Total</span><span>---</span><span>Physic...</span><span>\\STUDENT-...</span></div>
          <div class="crw on"><i class="red"></i><span>1.000</span><span>% Processor...</span><span>_Total</span><span>---</span><span>Proces...</span><span>\\STUDENT-...</span></div>
          <div class="crw"><i class="yellow"></i><span>0.10...</span><span>Packets/sec</span><span>Intel[R] ...</span><span>---</span><span>Netwo...</span><span>\\STUDENT-...</span></div>
        </div>
      </div>
    </div>
  </div>
  <footer class="pf-status"><i></i><i></i><i></i></footer>
</section>
</body>
</html>
```

FILE: styles.css
```css
*, *::before, *::after { box-sizing: border-box; margin: 0; padding: 0; }
body { width: 1148px; height: 784px; overflow: hidden; position: relative; font-family: "Liberation Sans", Arial, sans-serif; font-size: 12px; color: #333; }
i, em { font-style: normal; display: block; flex: none; }
svg { display: block; flex: none; }
label, span, h1, h2, h3, legend { white-space: nowrap; }
.defs { position: absolute; }

/* desktop */
.desktop { position: absolute; left: 0; top: 714px; width: 1148px; height: 70px; overflow: hidden;
  background:
    radial-gradient(ellipse 80px 8px at 650px 70px, #4a4e58, transparent),
    linear-gradient(30deg, transparent 50%, rgba(140,145,160,.55) 58%, transparent 75%) 475px 0 / 60px 30px no-repeat,
    radial-gradient(ellipse 250px 62px at 130px 84px, rgba(214,224,246,.95) 0, rgba(180,197,232,.75) 45%, rgba(120,142,182,.35) 75%, rgba(80,105,150,0)),
    linear-gradient(100deg, #b9ccfb 0, #a9bff2 45px, #7f98cd 95px, #50699a 150px, #344a70 210px, #2c4164 270px, #33496f 380px, #3d5784 440px, #34507f 500px, #1f2f4c 640px, #24427c 700px); }
.dicon { position: absolute; left: 8px; }
.dicon-top { top: 3px; }
.dicon-low { top: 64px; }
.dlabel { position: absolute; left: -14px; top: 21px; width: 69px; height: 28px; background: #004e98; color: #fff; text-align: center; font: 11px/13px "DejaVu Sans Condensed", sans-serif; white-space: nowrap; letter-spacing: -.2px; }
.deskedge { position: absolute; left: 776px; right: 0; bottom: 0; height: 3px; background: #fff; }

/* window buttons */
.wbtns { display: flex; margin-left: auto; }
.wbtns i { width: 16px; height: 21px; background: #ece9d8; border: 1px solid; border-color: #fff #716f64 #716f64 #fff; box-shadow: inset -1px -1px #aca899; overflow: hidden; }
.wbtns .x { margin-left: 2px; }

/* JMeter window */
.jm { position: absolute; left: 0; top: 0; width: 1148px; height: 717px; background: #eee; border: solid #ece9d8; border-width: 1px 3px 4px 1px; display: flex; flex-direction: column; }
.jm::after { content: ""; position: absolute; left: -1px; right: -3px; top: -1px; bottom: -4px; border-right: 1px solid #8b887a; border-bottom: 2px solid #716f64; }
.jm-title { flex: none; height: 25px; display: flex; align-items: center; padding: 0 0 0 5px; background: linear-gradient(90deg, #7a96df, #9db9eb); }
.jm-title h1 { margin-left: 5px; font: bold 11.500px "DejaVu Sans Condensed", sans-serif; color: #d8e4f8; letter-spacing: .43px; }
.jm-title .wbtns { margin-right: 2px; }
.jm-menu { flex: none; height: 24px; border-top: 1px solid #ece9d8; border-bottom: 1px solid #ccc; background: linear-gradient(#fff, #dadada); display: flex; gap: 11.300px; align-items: center; padding: 0 0 1px 5px; font-weight: bold; }
.jm-menu u { text-underline-offset: 2px; }
.jm-tools { flex: none; height: 38px; display: flex; align-items: flex-start; padding: 1px 0 0 2px; background: #eee; }
.tg { display: flex; gap: 1px; padding-right: 11px; height: 36px; background: linear-gradient(90deg, transparent calc(100% - 11px), #fff calc(100% - 11px), #e4e4e4); }
.tg.last { padding-right: 3px; background: none; }
.tg b { width: 33px; height: 33px; border: 1px solid #999; background: #eee; box-shadow: inset 1px 1px #fff, 1px 1px #fff; display: flex; align-items: center; justify-content: center; }
.tg svg { width: 22px; height: 22px; }
.tg .off { border-color: #c8c8c8; }
.jm-count { margin-left: auto; display: flex; align-items: center; height: 36px; font-weight: bold; }
.warn { margin-left: 4px; margin-right: 22px; }
.thr { width: 48px; letter-spacing: .1px; }
.led { width: 10px; height: 9px; border: 1px solid #9aa8b8; border-right: 0; border-bottom-color: #fff; background: linear-gradient(#fff, #b8cfe5); }
.jm-body { flex: 1; display: flex; min-height: 0; }

.tree { width: 205px; flex: none; border: 2px solid #7a8a99; border-right-width: 1px; border-bottom-width: 1px; background: #fff; display: flex; flex-direction: column; height: 624px; }
.rows { flex: 1; overflow: hidden; font-size: 11px; }
.r { height: 19px; display: flex; align-items: center; white-space: nowrap; }
.r svg { width: 20px; height: 19px; margin: 0 2px 0 -1px; }
.r .fl { margin: 0 1px 0 0; }
.r span { height: 19px; line-height: 20px; padding: 0 3px 0 1px; letter-spacing: -.08px; }
.r i:nth-of-type(4) ~ span { letter-spacing: -.2px; }
.r .sel { background: #b8cfe5; }
.r i { width: 20px; height: 19px; background: no-repeat 7px 0 / 1px 100% linear-gradient(#b8cfe5, #b8cfe5); }
.r i:not([class]) { background: none; }
.r .t, .r .l { background: no-repeat 7px 0 / 1px 100% linear-gradient(#b8cfe5, #b8cfe5), no-repeat 7px 9px / 10px 1px linear-gradient(#b8cfe5, #b8cfe5); }
.r .l { background-size: 1px 10px, 10px 1px; }
.r .h { position: relative; background: no-repeat 7px 10px / 1px 9px linear-gradient(#b8cfe5, #b8cfe5), no-repeat 11px 9px / 7px 1px linear-gradient(#b8cfe5, #b8cfe5); }
.r .m { background-position: 7px 0, 11px 9px; background-size: 1px 19px, 7px 1px; }
.r .e { background-position: 7px 0, 11px 9px; background-size: 1px 9px, 7px 1px; }
.r .h::before { content: ""; position: absolute; left: 5px; top: 6px; width: 6px; height: 6px; border: 2px solid #6382bf; border-radius: 2.500px; background: #fff; }
.r .h::after { content: ""; position: absolute; left: 7px; top: 12px; width: 2px; height: 4px; background: #6382bf; }
.hscroll { height: 16px; display: flex; border-top: 1px solid #7a8a99; background: #eee; }
.arr { width: 15px; }
.thumb { width: 155px; border: 1px solid #6382bf; border-width: 0 1px; display: flex; gap: 1px; justify-content: center; align-items: center; background: linear-gradient(#d5e2f0, #fff 35%, #b8cfe5); }
.thumb em { width: 1px; height: 9px; background: #6382bf; }
.track { flex: 1; }
.r2 { border-left: 1px solid #7a8a99; }
.divider { width: 10px; flex: none;
  background: repeating-linear-gradient(#8a8a8a 0 1px, transparent 1px 4px) 5px 0 / 1px 100% no-repeat, repeating-linear-gradient(transparent 0 2px, #8a8a8a 2px 3px, transparent 3px 4px) 7px 0 / 1px 100% no-repeat, #eee; }

.panel { width: 927px; height: 624px; flex: none; border: 2px solid #7a8a99; border-right-width: 1px; border-bottom-width: 1px; display: flex; flex-direction: column; }
.panel label, .panel legend { font-weight: bold; }
.panel h2 { height: 37px; flex: none; padding: 13px 0 0 10px; font-size: 16px; line-height: 18px; }
.namebox { flex: none; width: 904px; height: 44px; margin-left: 10px; border: 1px solid #999; padding: 1px 1px 1px 0; box-shadow: 1px 1px #fff, inset 1px 1px #fff; }
.nrow { display: flex; height: 20px; line-height: 20px; padding-left: 1px; }
.nrow label { width: 41px; }
.field { flex: 1; height: 20px; border: 1px solid #7a8a99; background: #fff; padding-left: 2px; line-height: 19px; }
.crow { display: flex; height: 16px; margin-top: 5px; line-height: 17px; padding-left: 1px; }
.blank { flex: 1; background: #fff; }
.fs { flex: none; width: 901px; height: 46px; margin: 6px 0 0 12px; border: 1px solid #b8cfe5; min-width: 0; }
.fs legend { margin-left: 3px; padding: 0 3px 0 2px; line-height: 14px; height: 15px; letter-spacing: -.02px; }
.frow { display: flex; height: 27px; align-items: center; margin-top: -5px; padding-left: 1px; }
.frow label:first-child { width: 57px; }
.file { width: 401px; height: 25px; border: 1px solid #7a8a99; background: #fff; box-shadow: 1px 1px #fff; }
.btn { border: 1px solid #7a8a99; background: linear-gradient(#dde8f3, #fff 35%, #b8cfe5); display: flex; align-items: center; justify-content: center; white-space: nowrap; color: #222; }
.browse { width: 76px; height: 24px; margin-left: 6px; font-size: 9px; letter-spacing: .45px; }
.conf { width: 90px; height: 26px; font-weight: bold; letter-spacing: -.1px; }
.lg { width: 106px; margin-left: 4px; letter-spacing: -.25px; }
.cb { width: 13px; height: 13px; border: 1px solid #7a8a99; background: linear-gradient(#dde8f3, #fff 40%, #b8cfe5); margin-right: 3px; }
.er { width: 50px; }
.su { width: 74px; letter-spacing: .15px; }
.scroll { flex: none; margin-top: 7px; height: 443px; border: 1px solid #7a8a99; border-width: 1px 1px 1px 0; box-shadow: 0 1px #fff; }
.agg { border-collapse: separate; border-spacing: 0; table-layout: fixed; width: 922px; border-left: 1px solid #7a8a99; letter-spacing: .3px; }
.c92 { width: 92px; } .c93 { width: 93px; }
.agg th { height: 20px; font-weight: normal; background: #eee; border: solid #7a8a99; border-width: 0 1px 1px 0; box-shadow: inset 1px 1px #fff; line-height: 18px; padding-top: 1px; padding-left: 3px; }
.agg td { height: 16px; line-height: 15px; background: #fff; border: solid #7a8a99; border-width: 0 1px 1px 0; text-align: right; padding-right: 1px; overflow: hidden; white-space: nowrap; }
.agg td:first-child { text-align: left; padding: 0 0 0 1px; letter-spacing: .1px; }
.include { flex: 1; display: flex; align-items: center; padding: 3px 0 0 239px; }

/* Performance window */
.pf { position: absolute; left: 509px; top: 331px; width: 638px; height: 451px; background: #ece9d8; border: 1px solid; border-color: #ece9d8 #716f64 #716f64 #ece9d8; box-shadow: inset 1px 1px #fff, inset -1px -1px #aca899; padding: 2px; display: flex; flex-direction: column; font: 11px "DejaVu Sans Condensed", "DejaVu Sans", sans-serif; color: #000; letter-spacing: -.1px; }
.pf-title { flex: none; height: 25px; background: linear-gradient(90deg, #0054e3, #3d95ff); display: flex; align-items: center; padding: 0 1px 0 5px; }
.pf-title h3 { margin-left: 5px; font: bold 12px "DejaVu Sans Condensed", sans-serif; color: #fff; letter-spacing: .05px; }
.pf-menu { flex: none; height: 26px; margin-top: 1px; border: 1px solid #aca899; border-width: 1px 0 1px 1px; box-shadow: inset 1px 1px #fff, 0 1px #fff; display: flex; align-items: center; padding: 0 0 1px 1px; }
.pf-menu > svg { margin-right: 7px; }
.pf-menu span { padding-top: 1px; }
.w32 { width: 32px; } .w46 { width: 46px; } .w38 { width: 38px; } .w61 { width: 61px; } .w54 { width: 54px; }
.mdi { margin-left: auto; height: 22px; padding: 3px 3px 0 3px; border-left: 1px solid #aca899; box-shadow: inset 1px 0 #fff; display: flex; }
.mdi i { width: 16px; height: 16px; border: 1px solid; border-color: #fff #716f64 #716f64 #fff; box-shadow: inset -1px -1px #aca899; overflow: hidden; }
.mdi .x { margin-left: 2px; }
.pf-bar { flex: none; height: 23px; border-bottom: 1px solid #aca899; display: flex; align-items: center; padding-left: 5px; }
.pf-bar svg { width: 16px; height: 16px; }
.pf-bar .a2 { margin-left: 7px; }
.pf-bar .sep { width: 2px; height: 18px; margin: 0 7px 0 7px; background: #aca899; border-right: 1px solid #fff; }
.pf-bar b { width: 22px; height: 22px; margin-left: 3px; border: 1px solid; border-color: #aca899 #fff #fff #aca899; background: repeating-conic-gradient(#fff 0 25%, #ece9d8 0 50%) 0 0 / 2px 2px; padding: 2px; }
.pf-bar .s2 { margin: 0 9px 0 4px; }
.pf-bar .hp { margin-right: 8px; }
.pf-body { flex: none; height: 346px; margin-top: 3px; display: flex; gap: 4px; }
.pf-tree { width: 194px; background: #fff; border: 1px solid; border-color: #aca899 #fff #fff #716f64; outline: 1px solid #d8d4c4; outline-offset: -1px; box-shadow: inset 1px 1px #716f64; padding: 1px 0 0 5px; }
.pf-tree div { display: flex; align-items: center; height: 16px; letter-spacing: -.14px; }
.pf-tree svg { width: 16px; height: 16px; }
.pf-tree span { margin-left: 4px; line-height: 16px; padding-top: 1px; height: 16px; }
.pf-tree .p0 span { margin-left: 3px; }
.p1 .dots { width: 18px; height: 16px; margin-left: 0; background: repeating-linear-gradient(#aca899 0 1px, transparent 1px 2px) 7px 0 / 1px 100% no-repeat, repeating-linear-gradient(90deg, #aca899 0 1px, transparent 1px 2px) 7px 8px / 11px 1px no-repeat; }
.p1 .end { background-size: 1px 8px, 11px 1px; padding: 4px 0 0 3px; }
.end em { width: 9px; height: 9px; border: 1px solid #7b7a6c; background: linear-gradient(#000, #000) 1px 3px / 5px 1px no-repeat, linear-gradient(#000, #000) 3px 1px / 1px 5px no-repeat, #fff; }
.pf-tree .psel { background: #ece9d8; padding: 1px 4px 0 2px; margin-left: 2px; width: 81px; }
.pf-mon { width: 435px; border: 1px solid; border-color: #aca899 #fff #fff #aca899; box-shadow: inset 1px 1px #716f64; }
.mbar { height: 29px; padding: 3px 0 0 8px; display: flex; gap: 8px; border-bottom: 1px solid #000; margin-left: 1px; }
.mg { display: flex; }
.mg b { width: 23px; height: 21px; border: 1px solid; border-color: #fff #716f64 #716f64 #fff; box-shadow: inset -1px -1px #aca899; padding: 2px 0 0 3px; }
.mg .on { border-color: #aca899 #fff #fff #aca899; box-shadow: none; background: repeating-conic-gradient(#fff 0 25%, #ece9d8 0 50%) 0 0 / 2px 2px; }
.mg svg { width: 16px; height: 16px; }
.chart { display: flex; margin-top: 5px; height: 168px; }
.ylab { width: 38px; display: flex; flex-direction: column; text-align: right; letter-spacing: .1px; }
.ylab span { height: 31px; flex: none; line-height: 16px; }
.plot { margin: 6px 0 0 10px; }
.stats { display: flex; height: 16px; align-items: center; margin: 2px 0 3px 18px; }
.stats output { width: 90px; height: 16px; line-height: 16px; border: 1px solid; border-color: #aca899 #fff #fff #aca899; text-align: right; padding-right: 2px; margin-right: 9px; letter-spacing: .1px; }
.stats label:nth-of-type(1) { width: 25px; }
.stats label:nth-of-type(2) { width: 46px; }
.stats label:nth-of-type(3) { width: 45px; }
.two { margin-left: 138px; }
.two label:nth-of-type(1) { width: 49px; }
.stats .tight { letter-spacing: -.6px; }
.ctr { margin: 9px 0 0 10px; width: 413px; }
.crw { display: grid; grid-template-columns: 45px 45px 81px 61px 52px 52px 1fr; letter-spacing: 0; }
.chead { height: 20px; border: 1px solid #000; border-bottom-width: 2px; letter-spacing: -.2px; }
.chead span { border: 1px solid; border-color: #fff #716f64 #aca899 #fff; padding-left: 5px; line-height: 17px; height: 17px; }
.clist { height: 65px; border: 1px solid; border-color: #ece9d8 #fff #fff #aca899; padding: 2px 1px; background: #fff; }
.clist .crw { height: 15px; align-items: center; }
.clist span { padding-left: 2px; overflow: hidden; line-height: 15px; height: 15px; }
.clist i { width: 39px; height: 1px; margin-left: 3px; }
.clist .on { background: #316ac5; color: #fff; outline: 1px dotted #000; outline-offset: -1px; }
.blue { background: #00f; } .green { background: #008000; } .red { background: #f00; } .yellow { background: #ff0; }
.pf-status { flex: none; height: 20px; margin-top: 2px; display: grid; grid-template-columns: 414px 131px 84px; gap: 2px; }
.pf-status i { border: 1px solid; border-color: #aca899 #fff #fff #aca899; }
```
